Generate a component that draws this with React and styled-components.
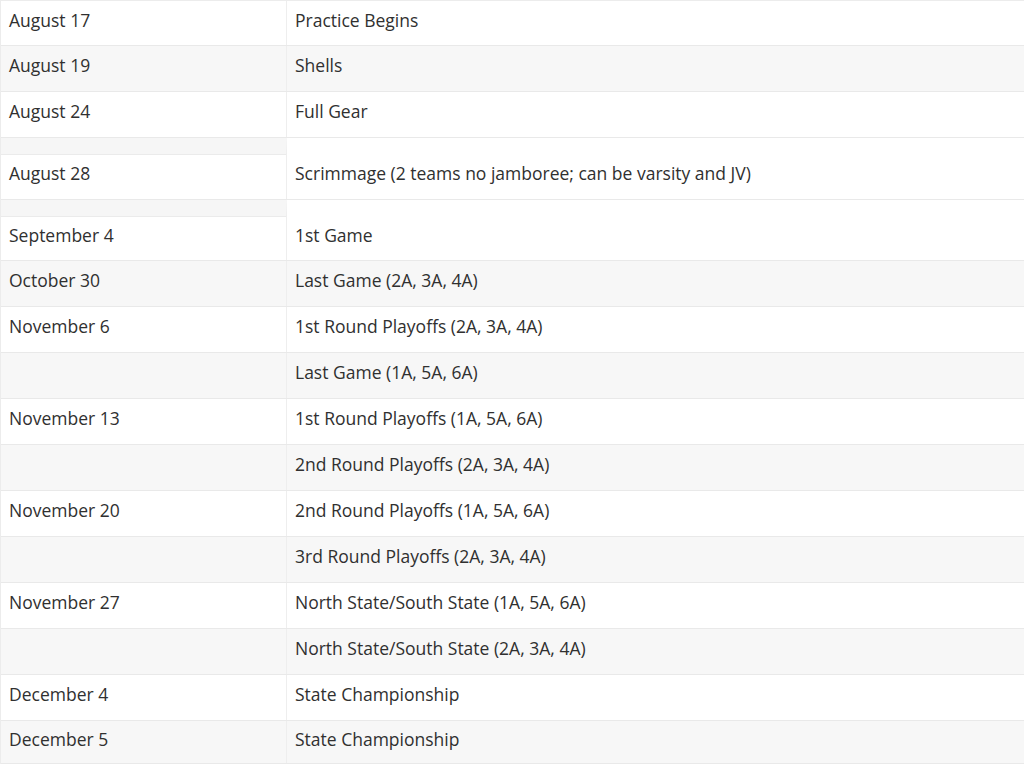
import React from 'react'
import styled, { createGlobalStyle } from 'styled-components'

const GlobalStyle = createGlobalStyle`
  html, body {
    margin: 0;
    padding: 0;
    background: #fff;
  }
  body {
    font-family: 'Open Sans', 'Liberation Sans', sans-serif;
    color: #333;
  }
`

const Table = styled.div`
  width: 1024px;
  border-top: 1px solid #ececec;
  border-left: 1px solid #ececec;
  box-sizing: border-box;
`

const Row = styled.div`
  display: grid;
  grid-template-columns: 286px 1fr;
  height: ${p => p.$h}px;
  box-sizing: border-box;
  border-bottom: 1px solid #e9e9e9;
  background: ${p => (p.$shade ? '#f7f7f7' : '#fff')};
`

const Cell = styled.div`
  display: flex;
  align-items: center;
  padding: ${p => (p.$drop ? 16 : 0)}px 8px 7px;
  font-size: 17.5px;
  line-height: 22px;
  color: #303030;
  box-sizing: border-box;
  border-right: ${p => (p.$first ? '1px solid #eeeeee' : 'none')};
  ${p => p.$notch && `
    padding-top: 0;
    border-top: 16px solid #f6f6f6;
    box-shadow: inset 0 1px 0 #ebebeb;
    background: #fff;
  `}
`

const rows = [
  { date: 'August 17', event: 'Practice Begins', h: 45 },
  { date: 'August 19', event: 'Shells', shade: true },
  { date: 'August 24', event: 'Full Gear' },
  { date: 'August 28', event: 'Scrimmage (2 teams no jamboree; can be varsity and JV)', tall: true, h: 62 },
  { date: 'September 4', event: '1st Game', tall: true, h: 61 },
  { date: 'October 30', event: 'Last Game (2A, 3A, 4A)', shade: true },
  { date: 'November 6', event: '1st Round Playoffs (2A, 3A, 4A)' },
  { date: '', event: 'Last Game (1A, 5A, 6A)', shade: true },
  { date: 'November 13', event: '1st Round Playoffs (1A, 5A, 6A)' },
  { date: '', event: '2nd Round Playoffs (2A, 3A, 4A)', shade: true },
  { date: 'November 20', event: '2nd Round Playoffs (1A, 5A, 6A)' },
  { date: '', event: '3rd Round Playoffs (2A, 3A, 4A)', shade: true },
  { date: 'November 27', event: 'North State/South State (1A, 5A, 6A)' },
  { date: '', event: 'North State/South State (2A, 3A, 4A)', shade: true },
  { date: 'December 4', event: 'State Championship' },
  { date: 'December 5', event: 'State Championship', shade: true, h: 43 }
]

export default function App () {
  return (
    <>
      <GlobalStyle />
      <Table>
        {rows.map((r, i) => (
          <Row key={i} $shade={r.shade} $h={r.h || 46}>
            <Cell $first $notch={r.tall}>{r.date}</Cell>
            <Cell $drop={r.tall}>{r.event}</Cell>
          </Row>
        ))}
      </Table>
    </>
  )
}
